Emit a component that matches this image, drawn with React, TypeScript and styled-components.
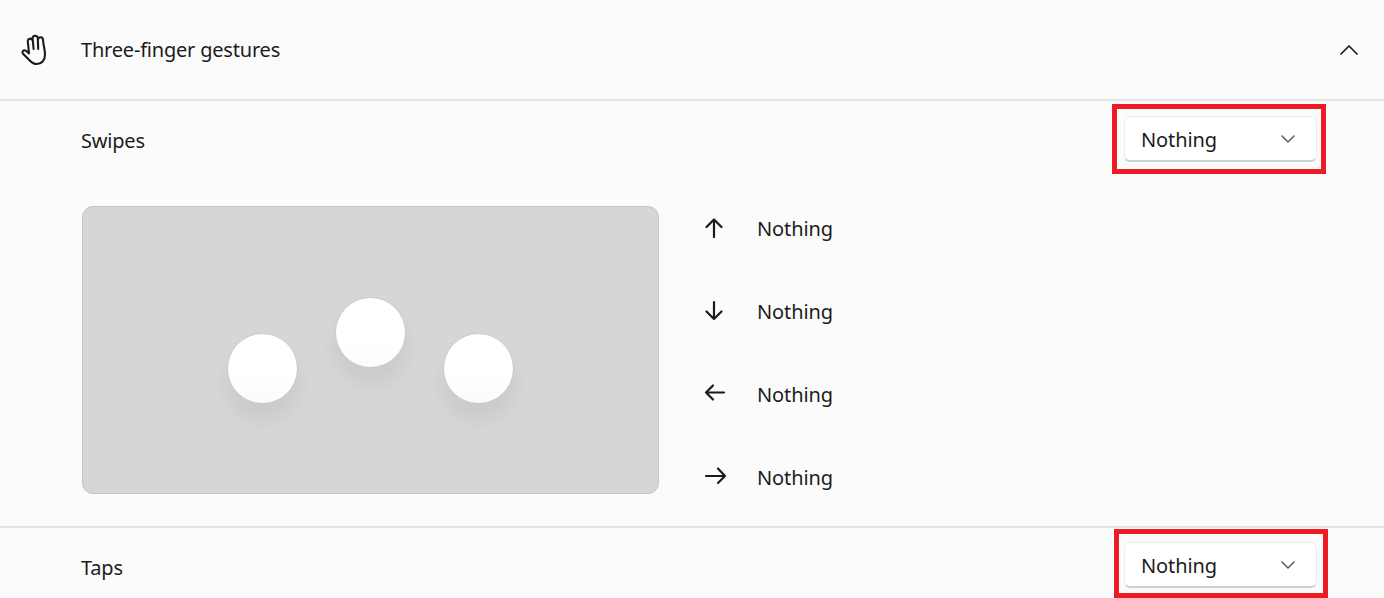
import React from "react";
import styled, { createGlobalStyle } from "styled-components";
import { ChevronDown, ChevronUp } from "lucide-react";

const GlobalStyle = createGlobalStyle`
  html, body {
    margin: 0;
    background: #fbfbfb;
    overflow: hidden;
  }
  body {
    font-family: "Noto Sans", "Open Sans", sans-serif;
    color: #1b1b1b;
  }
`;

const Page = styled.div`
  width: 1384px;
  height: 598px;
  overflow: hidden;
  background: #fbfbfb;
`;

const Header = styled.header`
  height: 99px;
  display: flex;
  align-items: center;
  padding: 0 19px 0 20px;
  border-bottom: 2px solid #e5e5e5;
`;

const HeaderIcon = styled.svg`
  width: 28px;
  height: 32px;
  flex: none;
`;

const Title = styled.span`
  margin-left: 33px;
  flex: 1;
  font-size: 20px;
  letter-spacing: -0.2px;
`;

const SettingRow = styled.div<{ $top: number }>`
  display: flex;
  align-items: center;
  justify-content: space-between;
  padding: ${(p) => p.$top}px 58px 0 81px;
`;

const RowLabel = styled.span<{ $drop: number }>`
  margin-top: ${(p) => p.$drop}px;
  font-size: 20px;
  letter-spacing: -0.2px;
`;

// the red annotation boxes don't sit the same way round the two dropdowns
const Highlight = styled.div<{ $alt?: boolean }>`
  width: 214px;
  height: ${(p) => (p.$alt ? 69 : 70)}px;
  box-sizing: border-box;
  border: 5px solid #ed1c24;
  padding: ${(p) => (p.$alt ? "8px 6px 0 5px" : "7px 4px 0 7px")};
  margin-right: ${(p) => (p.$alt ? -2 : 0)}px;
`;

const Dropdown = styled.div`
  height: 46px;
  box-sizing: border-box;
  display: flex;
  align-items: center;
  justify-content: space-between;
  padding: 0 16px 0 16px;
  background: #fff;
  border: 1px solid #ececec;
  border-bottom: 2px solid #d0d0d0;
  border-radius: 6px;
  font-size: 20px;
  letter-spacing: -0.1px;
`;

const DropdownText = styled.span`
  margin-top: 2px;
`;

const SwipeArea = styled.section`
  display: flex;
  gap: 44px;
  padding: 32px 0 32px 82px;
  border-bottom: 2px solid #e5e5e5;
`;

const Trackpad = styled.div`
  position: relative;
  width: 577px;
  height: 288px;
  box-sizing: border-box;
  background: #d5d7d6;
  border: 1px solid #c4c6c5;
  border-radius: 11px;
`;

const Finger = styled.div<{ $x: number; $y: number }>`
  position: absolute;
  left: ${(p) => p.$x}px;
  top: ${(p) => p.$y}px;
  width: 71px;
  height: 71px;
  box-sizing: border-box;
  border-radius: 50%;
  background: linear-gradient(#ffffff 60%, #fbfbfb);
  border: 1px solid #c9cac9;
  box-shadow: 0 16px 20px rgba(0, 0, 0, 0.06);
`;

const ActionList = styled.ul`
  list-style: none;
  margin: 0;
  padding: 0;
  height: 288px;
  display: flex;
  flex-direction: column;
  gap: 39px;
`;

const ActionItem = styled.li`
  flex: none;
  height: 44px;
  display: flex;
  align-items: center;
  gap: 30px;
  font-size: 20px;
  letter-spacing: -0.1px;
`;

const ArrowIcon = styled.svg`
  width: 24px;
  height: 22px;
  flex: none;
  position: relative;
  top: -1px;
`;

const Chevron = styled(ChevronDown)`
  color: #5c5c5c;
`;

const CollapseIcon = styled(ChevronUp)`
  color: #1b1b1b;
`;

const arrows: Record<string, string> = {
  up: "M11 21V3.5M3.5 11L11 3.5l7.5 7.5",
  down: "M11 3v17M3.5 12.5L11 20l7.5-7.5",
  left: "M21 10.5H3M10 3.5l-7 7 7 7",
  right: "M3 11h19M15 3.5l7 7.5-7 7",
};

const directions = ["up", "down", "left", "right"];

const App: React.FC = () => {
  return (
    <Page>
      <GlobalStyle />
      <Header>
        <HeaderIcon viewBox="0 0 28 32" fill="none" stroke="#1b1b1b" strokeWidth="2.1" strokeLinecap="round" strokeLinejoin="round">
          <path d="M9 19L7.8 7.5C7.4 4 12.4 3.6 12.8 7.2M13.6 15L12.6 4.5C12.3 1 17.6 .8 17.8 4.3L18.2 15M18 5.5C18.2 2.4 23 2.6 23 6C23.4 12 25 15 25 20.5C25 26.5 21.5 30 17 30C13.5 30 11.5 28.5 9.5 26.2L2.8 19.6C1.4 18 3.6 15.2 6 16.8L9 19.4" />
        </HeaderIcon>
        <Title>Three-finger gestures</Title>
        <CollapseIcon size={32} strokeWidth={1.3} />
      </Header>
      <SettingRow $top={3}>
        <RowLabel $drop={2}>Swipes</RowLabel>
        <Highlight>
          <Dropdown>
            <DropdownText>Nothing</DropdownText>
            <Chevron size={24} strokeWidth={1.5} />
          </Dropdown>
        </Highlight>
      </SettingRow>
      <SwipeArea>
        <Trackpad>
          <Finger $x={144} $y={126} />
          <Finger $x={252} $y={90} />
          <Finger $x={360} $y={126} />
        </Trackpad>
        <ActionList>
          {directions.map((dir) => (
            <ActionItem key={dir}>
              <ArrowIcon viewBox="0 0 24 22" fill="none" stroke="#1b1b1b" strokeWidth="2.2" strokeLinecap="round" strokeLinejoin="round">
                <path d={arrows[dir]} />
              </ArrowIcon>
              Nothing
            </ActionItem>
          ))}
        </ActionList>
      </SwipeArea>
      <SettingRow $top={1}>
        <RowLabel $drop={7}>Taps</RowLabel>
        <Highlight $alt>
          <Dropdown>
            <DropdownText>Nothing</DropdownText>
            <Chevron size={24} strokeWidth={1.5} />
          </Dropdown>
        </Highlight>
      </SettingRow>
    </Page>
  );
};

export default App;
